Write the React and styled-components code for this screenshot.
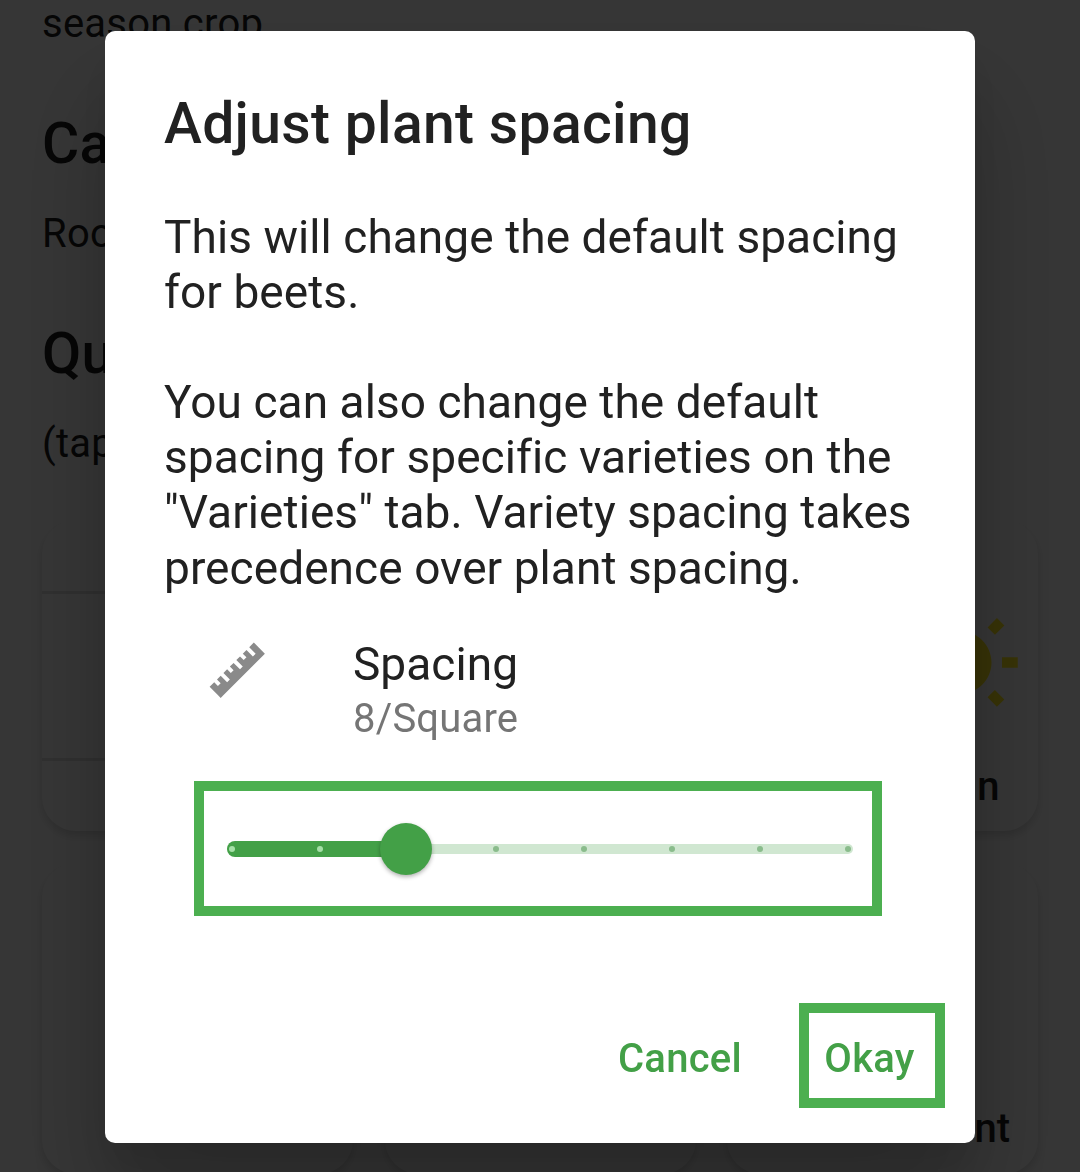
import React from "react";
import styled, { createGlobalStyle } from "styled-components";

const GlobalStyle = createGlobalStyle`
  * { box-sizing: border-box; }
  body {
    margin: 0;
    overflow: hidden;
    background: #fafafa;
    font-family: Roboto, "Liberation Sans", sans-serif;
    color: #212121;
  }
`;

const Page = styled.main`
  height: 1172px;
  padding: 0 42px;
  overflow: hidden;
  display: flex;
  flex-direction: column;
  color: #1c1c1c;
`;

const PageText = styled.p`
  margin: 0 0 ${(p) => p.$gap}px;
  height: 48px;
  flex: none;
  font-size: 40px;
  line-height: 48px;
  letter-spacing: 0.25px;
`;

const PageHeading = styled.h2`
  margin: 0 0 ${(p) => p.$gap}px;
  height: 68px;
  flex: none;
  font-size: 57px;
  font-weight: 500;
  line-height: 68px;
  letter-spacing: 0.35px;
`;

const CardGrid = styled.div`
  display: grid;
  grid-template-columns: repeat(3, 311px);
  grid-auto-rows: 311px;
  justify-content: space-between;
  row-gap: 32px;
`;

const Card = styled.section`
  display: flex;
  flex-direction: column;
  justify-content: flex-end;
  align-items: flex-end;
  padding: ${(p) => p.$pad || "0"};
  border-radius: 34px;
  background: #f9f9f9;
  box-shadow: 0 5px 8px rgba(0, 0, 0, 0.14);
  overflow: hidden;
`;

const CardBand = styled.div`
  width: 100%;
  height: ${(p) => p.$height}px;
  border-top: 3px solid #dcdcdc;
`;

const CardLabel = styled.span`
  font-size: 40px;
  font-weight: 500;
  line-height: 48px;
`;

const SunIcon = styled.svg`
  width: 126px;
  height: 126px;
  margin: 0 -23.5px 35.5px 0;
  fill: #ffeb20;
`;

const Scrim = styled.div`
  position: fixed;
  inset: 0;
  display: flex;
  justify-content: center;
  align-items: center;
  padding-top: 1.8px;
  background: rgba(0, 0, 0, 0.786);
`;

const Dialog = styled.div`
  width: 870px;
  height: 1111.4px;
  padding: 59px 30px 35px 59px;
  display: flex;
  flex-direction: column;
  border-radius: 10px;
  background: #fff;
  box-shadow: 0 66px 104px 8px rgba(0, 0, 0, 0.2), 0 30px 45px rgba(0, 0, 0, 0.1);
`;

const Title = styled.h1`
  margin: 0 0 51.5px;
  font-size: 57px;
  font-weight: 500;
  line-height: 68px;
  letter-spacing: 0.33px;
  white-space: nowrap;
`;

const Message = styled.p`
  margin: 0;
  font-size: 46px;
  line-height: 55.16px;
  letter-spacing: 0.06px;
  white-space: pre;
`;

const SettingRow = styled.div`
  display: flex;
  gap: 84.5px;
  margin: 40px 0 0 42px;
`;

const RulerIcon = styled.svg`
  width: 62.5px;
  height: 62.5px;
  margin-top: 3px;
  fill: #8a8a8a;
`;

const SettingName = styled.div`
  font-size: 46px;
  line-height: 56px;
  letter-spacing: 0.05px;
`;

const SettingValue = styled.div`
  padding-top: 1px;
  font-size: 40px;
  line-height: 52px;
  letter-spacing: 0.2px;
  color: #757575;
`;

const SliderFrame = styled.div`
  width: 688px;
  height: 135px;
  margin: 36px 0 0 30px;
  padding: 1px 19px 0 23px;
  border: 10px solid #4caf50;
  display: flex;
  align-items: center;
  flex: none;
`;

const Track = styled.div`
  position: relative;
  width: 626px;
  height: 10px;
  border-radius: 5px;
  background: #d0e7d1;
`;

const ActiveTrack = styled.div`
  position: absolute;
  left: 0;
  top: -3px;
  width: 179px;
  height: 16px;
  border-radius: 8px;
  background: #43a047;
`;

const Ticks = styled.div`
  position: absolute;
  inset: 0;
  padding: 0 2px;
  display: flex;
  justify-content: space-between;
  align-items: center;
`;

const Tick = styled.i`
  width: 6px;
  height: 6px;
  border-radius: 50%;
  background: ${(p) => (p.$active ? "#a5dfa7" : "#8abc8c")};
`;

const Thumb = styled.div`
  position: absolute;
  left: 152.6px;
  top: -21.2px;
  width: 52.8px;
  height: 52.8px;
  border-radius: 50%;
  background: #43a047;
  box-shadow: 0 2px 4px rgba(0, 0, 0, 0.3);
`;

const Actions = styled.div`
  display: flex;
  justify-content: flex-end;
  gap: 45px;
  margin-top: auto;
`;

const Action = styled.button`
  height: 105px;
  width: 146px;
  padding: 8px 5px 0 0;
  border: 10px solid ${(p) => (p.$framed ? "#4caf50" : "transparent")};
  background: none;
  color: #43a047;
  font: 500 40px/48px Roboto, "Liberation Sans", sans-serif;
  letter-spacing: 0.25px;
  text-align: center;
`;

const steps = [0, 1, 2, 3, 4, 5, 6, 7];
const current = 2;

export default function App() {
  return (
    <>
      <GlobalStyle />
      <Page>
        <PageText $gap={62}>season crop</PageText>
        <PageHeading $gap={32}>Ca</PageHeading>
        <PageText $gap={62}>Roo</PageText>
        <PageHeading $gap={32}>Qu</PageHeading>
        <PageText $gap={52}>(tap</PageText>
        <CardGrid>
          <Card>
            <CardBand $height={167} />
            <CardBand $height={73} />
          </Card>
          <Card />
          <Card $pad="0 38.5px 20px 0">
            <SunIcon viewBox="0 0 24 24">
              <path d="M6.76 4.84l-1.8-1.79-1.41 1.41 1.79 1.79 1.42-1.41zM4 10.5H1v2h3v-2zm9-9.95h-2V3.5h2V.55zm7.45 3.91l-1.41-1.41-1.79 1.79 1.41 1.41 1.79-1.79zm-3.21 13.7l1.79 1.8 1.41-1.41-1.8-1.79-1.4 1.4zM20 10.5v2h3v-2h-3zm-8-5c-3.31 0-6 2.69-6 6s2.69 6 6 6 6-2.69 6-6-2.69-6-6-6zm-1 16.95h2V19.5h-2v2.95zm-7.45-3.91l1.41 1.41 1.79-1.8-1.41-1.41-1.79 1.8z" />
            </SunIcon>
            <CardLabel>n</CardLabel>
          </Card>
          <Card />
          <Card />
          <Card $pad="0 28px 21px 0">
            <CardLabel>nt</CardLabel>
          </Card>
        </CardGrid>
      </Page>
      <Scrim>
        <Dialog role="dialog">
          <Title>Adjust plant spacing</Title>
          <Message>
            {"This will change the default spacing\nfor beets.\n\nYou can also change the default\nspacing for specific varieties on the\n\"Varieties\" tab. Variety spacing takes\nprecedence over plant spacing."}
          </Message>
          <SettingRow>
            <RulerIcon viewBox="0 0 24 24">
              <path d="M1.39,18.36L3.16,16.6L4.58,18L5.64,16.95L4.22,15.54L5.64,14.12L8.11,16.6L9.17,15.54L6.7,13.06L8.11,11.65L9.53,13.06L10.59,12L9.17,10.59L10.59,9.17L13.06,11.65L14.12,10.59L11.65,8.11L13.06,6.7L14.47,8.11L15.54,7.05L14.12,5.64L15.54,4.22L18,6.7L19.07,5.64L16.6,3.16L18.36,1.39L22.61,5.64L5.64,22.61L1.39,18.36Z" />
            </RulerIcon>
            <div>
              <SettingName>Spacing</SettingName>
              <SettingValue>8/Square</SettingValue>
            </div>
          </SettingRow>
          <SliderFrame>
            <Track>
              <ActiveTrack />
              <Ticks>
                {steps.map((s) => (
                  <Tick key={s} $active={s < current} />
                ))}
              </Ticks>
              <Thumb />
            </Track>
          </SliderFrame>
          <Actions>
            <Action>Cancel</Action>
            <Action $framed>Okay</Action>
          </Actions>
        </Dialog>
      </Scrim>
    </>
  );
}
